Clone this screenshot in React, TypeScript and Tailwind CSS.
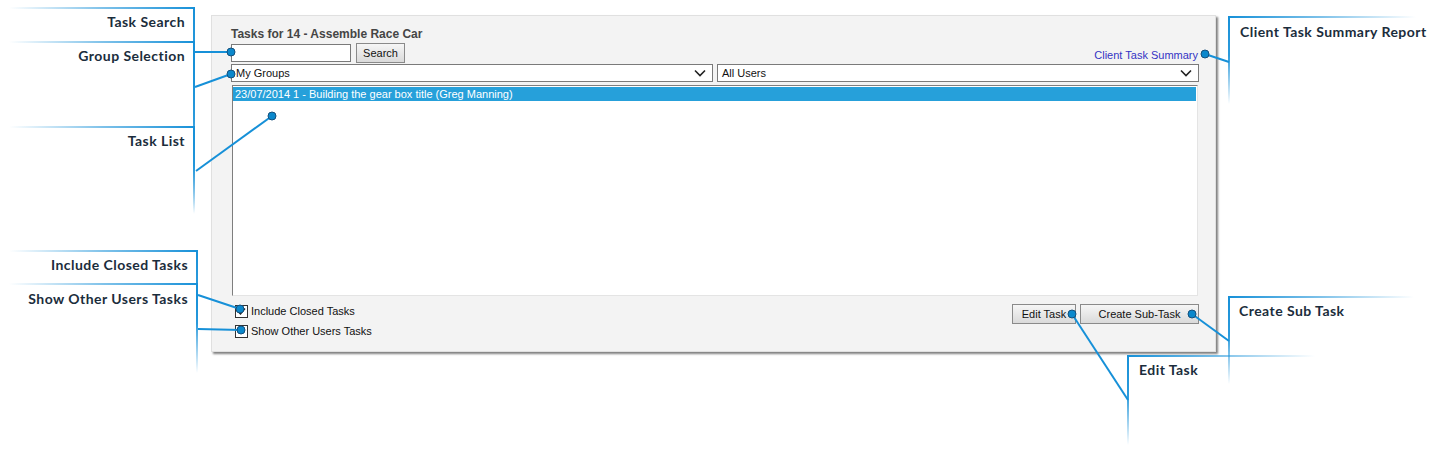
import React from "react";

const ui = { fontFamily: '"Liberation Sans", Arial, sans-serif' };
const callFont = { fontFamily: 'Lato, "Open Sans", sans-serif' };

function Chevron() {
  return (
    <svg width="12" height="8" viewBox="0 0 12 8" className="shrink-0">
      <polyline points="1,1.5 6,6.5 11,1.5" fill="none" stroke="#222" strokeWidth="1.6" />
    </svg>
  );
}

function Select({ label, className }: { label: string; className: string }) {
  return (
    <div className={`h-[18px] bg-white border border-[#7a7a7a] flex items-center justify-between pl-[4px] pr-[6px] text-[11px] text-[#111] ${className}`}>
      <span>{label}</span>
      <Chevron />
    </div>
  );
}

function Checkbox({ checked, label }: { checked?: boolean; label: string }) {
  return (
    <div className="flex items-center h-[13px] gap-[3px] ml-[4px]">
      <div className="w-[13px] h-[13px] border border-[#333] bg-white flex items-center justify-center">
        {checked && (
          <svg width="9" height="9" viewBox="0 0 9 9">
            <polyline points="1,4.5 3.5,7 8,1.5" fill="none" stroke="#222" strokeWidth="1.5" />
          </svg>
        )}
      </div>
      <span className="text-[11px] text-[#111]">{label}</span>
    </div>
  );
}

const btn =
  "border border-[#8a8a8a] bg-gradient-to-b from-[#f6f6f6] to-[#dadada] text-[11px] text-[#111] flex items-center justify-center";

type Callout = {
  text: string;
  side: "left" | "right";
  x: number;
  y: number;
  len: number;
  vlen: number;
  tx: number;
  ty: number;
};

const callouts: Callout[] = [
  { text: "Task Search", side: "left", x: 194, y: 8, len: 185, vlen: 120, tx: 185, ty: 22 },
  { text: "Group Selection", side: "left", x: 194, y: 42, len: 185, vlen: 172, tx: 185, ty: 56 },
  { text: "Task List", side: "left", x: 194, y: 127, len: 185, vlen: 88, tx: 185, ty: 141 },
  { text: "Include Closed Tasks", side: "left", x: 197, y: 251, len: 188, vlen: 80, tx: 188, ty: 265 },
  { text: "Show Other Users Tasks", side: "left", x: 197, y: 284, len: 188, vlen: 90, tx: 188, ty: 299 },
  { text: "Client Task Summary Report", side: "right", x: 1229, y: 17, len: 188, vlen: 88, tx: 1240, ty: 32 },
  { text: "Create Sub Task", side: "right", x: 1229, y: 297, len: 186, vlen: 88, tx: 1239, ty: 311 },
  { text: "Edit Task", side: "right", x: 1128, y: 356, len: 188, vlen: 90, tx: 1139, ty: 370 },
];

const connectors: [number, number, number, number][] = [
  [194, 52, 231, 52],
  [195, 87, 231, 74],
  [196, 171, 272, 116],
  [198, 295, 240, 309],
  [198, 329, 241, 330],
  [1229, 62, 1205, 54],
  [1229, 341, 1192, 314],
  [1128, 400, 1072, 314],
];

const BLUE = "#1690d8";

function Overlay() {
  return (
    <svg className="absolute inset-0 pointer-events-none" width="1453" height="474">
      <defs>
        <linearGradient id="hl" x1="0" y1="0" x2="1" y2="0">
          <stop offset="0" stopColor={BLUE} stopOpacity="0" />
          <stop offset="0.5" stopColor={BLUE} stopOpacity="0.55" />
          <stop offset="1" stopColor={BLUE} stopOpacity="1" />
        </linearGradient>
        <linearGradient id="hr" x1="0" y1="0" x2="1" y2="0">
          <stop offset="0" stopColor={BLUE} stopOpacity="1" />
          <stop offset="0.5" stopColor={BLUE} stopOpacity="0.55" />
          <stop offset="1" stopColor={BLUE} stopOpacity="0" />
        </linearGradient>
        <linearGradient id="vd" x1="0" y1="0" x2="0" y2="1">
          <stop offset="0" stopColor={BLUE} stopOpacity="1" />
          <stop offset="0.45" stopColor={BLUE} stopOpacity="0.9" />
          <stop offset="1" stopColor={BLUE} stopOpacity="0" />
        </linearGradient>
      </defs>
      {callouts.map((c, i) => (
        <g key={i}>
          {c.side === "left" ? (
            <rect x={c.x - c.len} y={c.y - 1} width={c.len + 1} height={2} fill="url(#hl)" />
          ) : (
            <rect x={c.x - 1} y={c.y - 1} width={c.len} height={2} fill="url(#hr)" />
          )}
          <rect x={c.x - 1} y={c.y - 1} width={2} height={c.vlen} fill="url(#vd)" />
        </g>
      ))}
      {connectors.map(([x1, y1, x2, y2], i) => (
        <g key={i}>
          <line x1={x1} y1={y1} x2={x2} y2={y2} stroke={BLUE} strokeWidth="2" />
          <circle cx={x2} cy={y2} r="4" fill="#0b88cc" stroke="#15507c" strokeWidth="1" />
        </g>
      ))}
    </svg>
  );
}

export default function App() {
  return (
    <div className="relative w-[1453px] h-[474px] bg-white overflow-hidden" style={ui}>
      {/* Panel */}
      <div className="ml-[211px] mt-[15px] w-[1005px] h-[337px] bg-[#f3f3f3] border border-[#e0e0e0] shadow-[2px_2px_2px_rgba(0,0,0,0.5)] pt-[11px] pl-[19px] pr-[16px] flex flex-col">
        <div className="h-[14px] leading-[14px] text-[12px] font-bold text-[#454545]">
          Tasks for 14 - Assemble Race Car
        </div>
        <div className="mt-[2px] h-[20px] flex items-center justify-between">
          <div className="flex items-center gap-[5px]">
            <div className="w-[120px] h-[18px] bg-white border border-[#7a7a7a]" />
            <div className={`${btn} w-[49px] h-[20px]`}>Search</div>
          </div>
          <a className="text-[11px] text-[#3434c4] leading-[14px] mr-[1px] pt-[3px]">Client Task Summary</a>
        </div>
        <div className="mt-[1px] flex gap-[4px]">
          <Select label="My Groups" className="w-[482px]" />
          <Select label="All Users" className="flex-1" />
        </div>
        <div className="mt-[3px] ml-[1px] mr-[1px] h-[211px] bg-white border border-t-[#7e7e7e] border-l-[#7e7e7e] border-r-[#e4e4e4] border-b-[#e4e4e4] pt-[1px]">
          <div className="h-[14px] bg-[#26a0da] text-white text-[11px] leading-[14px] pl-[2px] mr-[1px]">
            23/07/2014 1 - Building the gear box title (Greg Manning)
          </div>
        </div>
        <div className="flex justify-between">
          <div className="mt-[9px] flex flex-col gap-[7px]">
            <Checkbox checked label="Include Closed Tasks" />
            <Checkbox label="Show Other Users Tasks" />
          </div>
          <div className="mt-[8px] flex gap-[4px] h-[20px]">
            <div className={`${btn} w-[64px]`}>Edit Task</div>
            <div className={`${btn} w-[119px]`}>Create Sub-Task</div>
          </div>
        </div>
      </div>

      <Overlay />

      {/* Callout labels */}
      {callouts.map((c, i) =>
        c.side === "left" ? (
          <div
            key={i}
            className="absolute text-[14px] font-bold text-[#1b2d3c] leading-[16px] whitespace-nowrap text-right tracking-[0.45px]"
            style={{ ...callFont, right: 1453 - c.tx, top: c.ty - 8 }}
          >
            {c.text}
          </div>
        ) : (
          <div
            key={i}
            className="absolute text-[14px] font-bold text-[#1b2d3c] leading-[16px] whitespace-nowrap tracking-[0.45px]"
            style={{ ...callFont, left: c.tx, top: c.ty - 8 }}
          >
            {c.text}
          </div>
        )
      )}
    </div>
  );
}
